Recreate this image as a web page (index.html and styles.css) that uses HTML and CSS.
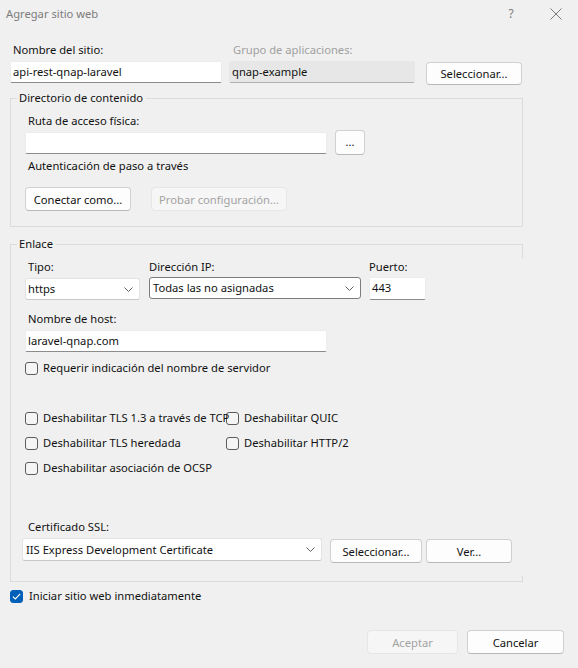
FILE: index.html
```html
<!DOCTYPE html>
<html lang="es">
<head>
<meta charset="utf-8">
<title>Agregar sitio web</title>
<link rel="stylesheet" href="styles.css">
</head>
<body>
<div class="dialog">
  <div class="titlebar">
    <span class="title">Agregar sitio web</span>
    <span class="help">?</span>
    <svg class="close" width="12" height="12" viewBox="0 0 12 12"><path d="M0.5 0.5 L11.5 11.5 M11.5 0.5 L0.5 11.5" stroke="#7a7a7a" stroke-width="1" fill="none"/></svg>
  </div>

  <div class="content">
    <div class="top-row">
      <div class="field f-name">
        <div class="lbl">Nombre del sitio:</div>
        <div class="input">api-rest-qnap-laravel</div>
      </div>
      <div class="field f-pool">
        <div class="lbl disabled">Grupo de aplicaciones:</div>
        <div class="input readonly">qnap-example</div>
      </div>
      <div class="btn btn-pool">Seleccionar...</div>
    </div>

    <div class="group group-dir">
      <span class="legend">Directorio de contenido</span>
      <div class="lbl">Ruta de acceso física:</div>
      <div class="path-row">
        <div class="input path-input"></div>
        <div class="btn btn-dots">...</div>
      </div>
      <div class="lbl auth-lbl">Autenticación de paso a través</div>
      <div class="btn-row">
        <div class="btn btn-connect">Conectar como...</div>
        <div class="btn disabled btn-test">Probar configuración...</div>
      </div>
    </div>

    <div class="group group-bind">
      <span class="legend">Enlace</span>
      <div class="bind-row">
        <div class="field f-type">
          <div class="lbl">Tipo:</div>
          <div class="select light">https<svg class="chev" width="9" height="5" viewBox="0 0 9 5"><path d="M0.5 0.5 L4.5 4.5 L8.5 0.5" stroke="#5f5f5f" fill="none"/></svg></div>
        </div>
        <div class="field f-ip">
          <div class="lbl ip-lbl">Dirección IP:</div>
          <div class="select dark">Todas las no asignadas<svg class="chev" width="9" height="5" viewBox="0 0 9 5"><path d="M0.5 0.5 L4.5 4.5 L8.5 0.5" stroke="#5f5f5f" fill="none"/></svg></div>
        </div>
        <div class="field f-port">
          <div class="lbl port-lbl">Puerto:</div>
          <div class="input">443</div>
        </div>
      </div>

      <div class="lbl host-lbl">Nombre de host:</div>
      <div class="input host-input">laravel-qnap.com</div>

      <div class="check sni"><span class="box"></span>Requerir indicación del nombre de servidor</div>

      <div class="check-grid">
        <div class="check"><span class="box"></span><span class="ctext">Deshabilitar TLS 1.3 a través de TCP</span></div>
        <div class="check"><span class="box"></span>Deshabilitar QUIC</div>
        <div class="check"><span class="box"></span>Deshabilitar TLS heredada</div>
        <div class="check"><span class="box"></span>Deshabilitar HTTP/2</div>
        <div class="check"><span class="box"></span>Deshabilitar asociación de OCSP</div>
      </div>

      <div class="lbl cert-lbl">Certificado SSL:</div>
      <div class="cert-row">
        <div class="select light cert-select">IIS Express Development Certificate<svg class="chev" width="9" height="5" viewBox="0 0 9 5"><path d="M0.5 0.5 L4.5 4.5 L8.5 0.5" stroke="#5f5f5f" fill="none"/></svg></div>
        <div class="btn btn-cert-sel">Seleccionar...</div>
        <div class="btn btn-view">Ver...</div>
      </div>
    </div>

    <div class="check start"><span class="box checked"><svg width="9" height="7" viewBox="0 0 9 7"><path d="M0.8 3.6 L3.3 6 L8.2 0.9" stroke="#ffffff" stroke-width="1.1" fill="none"/></svg></span>Iniciar sitio web inmediatamente</div>

    <div class="footer">
      <div class="btn disabled btn-ok">Aceptar</div>
      <div class="btn btn-cancel">Cancelar</div>
    </div>
  </div>
</div>
</body>
</html>
```

FILE: styles.css
```css
html, body {
  margin: 0;
  padding: 0;
  background: #f0f0f0;
}

body {
  font-family: "Noto Sans", "Open Sans", sans-serif;
  font-size: 11.2px;
  color: #111111;
}

.dialog {
  width: 578px;
  height: 668px;
  box-sizing: border-box;
  background: #f0f0f0;
  overflow: hidden;
}

.titlebar {
  height: 27px;
  display: flex;
  align-items: center;
  padding-left: 6px;
}

.title {
  color: #7c7c7c;
  flex: 1;
  line-height: 16px;
}

.help {
  color: #7c7c7c;
  width: 12px;
  font-size: 12px;
  margin-right: 33px;
  text-align: center;
}

.close {
  margin-right: 16px;
}

.content {
  padding-left: 10px;
}

.lbl {
  line-height: 16px;
  padding-left: 3px;
  white-space: nowrap;
}

.lbl.disabled {
  color: #a0a0a0;
}

.input {
  height: 22px;
  box-sizing: border-box;
  background: #ffffff;
  border: 1px solid #ececec;
  border-bottom-color: #8c8c8c;
  border-radius: 2px;
  padding-left: 2px;
  line-height: 20px;
  white-space: nowrap;
  overflow: hidden;
}

.input.readonly {
  background: #e7e7e7;
  border-color: #e7e7e7;
  border-bottom-color: #b0b0b0;
}

.btn {
  box-sizing: border-box;
  height: 24px;
  background: #fdfdfd;
  border: 1px solid #d0d0d0;
  border-bottom-color: #b8b8b8;
  border-radius: 4px;
  display: flex;
  align-items: center;
  justify-content: center;
  white-space: nowrap;
  color: #111111;
}

.btn.disabled {
  background: #f6f6f6;
  border-color: #e6e6e6;
  color: #a3a3a3;
}

/* top row */
.top-row {
  margin-top: 15px;
  display: flex;
  align-items: flex-end;
}

.field {
  display: flex;
  flex-direction: column;
}

.field .input,
.field .select {
  margin-top: 3px;
}

.f-name {
  width: 212px;
}

.f-pool {
  width: 186px;
  margin-left: 7px;
}

.f-pool .lbl {
  padding-left: 4px;
}

.btn-pool {
  width: 96px;
  height: 23px;
  margin-left: 11px;
  margin-bottom: -2px;
}

/* groups */
.group {
  position: relative;
  width: 513px;
  box-sizing: border-box;
  border: 1px solid #dcdcdc;
  padding-left: 14px;
}

.legend {
  position: absolute;
  top: -9px;
  left: 6px;
  padding: 0 3px 0 2px;
  background: #f0f0f0;
  line-height: 16px;
}

.group-dir {
  margin-top: 15px;
  padding-top: 14px;
  padding-bottom: 15px;
}

.path-row {
  margin-top: 1px;
  display: flex;
  align-items: center;
  gap: 8px;
  height: 25px;
}

.path-input {
  width: 302px;
}

.btn-dots {
  width: 30px;
  height: 25px;
  font-size: 11px;
  padding-bottom: 2px;
}

.auth-lbl {
  margin-top: 3px;
}

.btn-row {
  margin-top: 13px;
  display: flex;
  gap: 20px;
}

.btn-connect {
  width: 106px;
}

.btn-test {
  width: 136px;
}

.group-bind {
  margin-top: 17px;
  padding-top: 14px;
  padding-bottom: 18px;
  border-right: none;
}

.group-bind::before,
.group-bind::after {
  content: "";
  position: absolute;
  right: 0;
  width: 1px;
  background: #dcdcdc;
}

.group-bind::before {
  top: -1px;
  height: 15px;
}

.group-bind::after {
  bottom: -1px;
  height: 6px;
}

.bind-row {
  display: flex;
}

.select {
  position: relative;
  height: 22px;
  box-sizing: border-box;
  background: #ffffff;
  border-radius: 3px;
  padding-left: 3px;
  line-height: 20px;
  white-space: nowrap;
}

.select.light {
  border: 1px solid #e3e3e3;
  border-bottom-color: #c8c8c8;
}

.select.dark {
  border: 1px solid #7d7d7d;
}

.chev {
  position: absolute;
  right: 6px;
  top: 8px;
}

.f-type {
  width: 115px;
}

.f-type .select {
  height: 22px;
  margin-top: 3px;
  padding-left: 2px;
}

.f-ip {
  width: 212px;
  margin-left: 9px;
}

.f-ip .select {
  margin-top: 2px;
}

.ip-lbl {
  padding-left: 0;
}

.f-port {
  width: 57px;
  margin-left: 8px;
}

.f-port .input {
  margin-top: 2px;
  height: 23px;
}

.port-lbl {
  padding-left: 0;
}

.host-lbl {
  margin-top: 11px;
}

.host-input {
  width: 302px;
  margin-top: 3px;
}

.check {
  display: flex;
  align-items: center;
  height: 16px;
  line-height: 16px;
  white-space: nowrap;
}

.box {
  width: 13px;
  height: 13px;
  box-sizing: border-box;
  border: 1px solid #5c5c5c;
  border-radius: 3px;
  background: #f5f5f5;
  margin-right: 5px;
  flex: none;
  display: flex;
  align-items: center;
  justify-content: center;
  position: relative;
}

.ctext {
  position: relative;
  z-index: 1;
}

.box.checked {
  background: #005fb8;
  border-color: #005fb8;
}

.sni {
  margin-top: 8px;
}

.check-grid {
  margin-top: 34px;
  display: grid;
  grid-template-columns: 201px auto;
  row-gap: 9px;
}

.cert-lbl {
  margin-top: 43px;
}

.cert-row {
  margin-top: 3px;
  margin-left: -3px;
  display: flex;
  align-items: flex-start;
}

.cert-select {
  width: 300px;
  height: 23px;
  line-height: 21px;
}

.btn-cert-sel {
  width: 92px;
  margin-left: 8px;
  margin-top: 1px;
}

.btn-view {
  width: 86px;
  margin-left: 4px;
  margin-top: 1px;
}

.start {
  margin-top: 6px;
}

.start .box {
  margin-right: 6px;
}

.footer {
  margin-top: 26px;
  display: flex;
  justify-content: flex-end;
  gap: 9px;
  padding-right: 14px;
}

.btn-ok {
  width: 91px;
}

.btn-cancel {
  width: 97px;
}
```
